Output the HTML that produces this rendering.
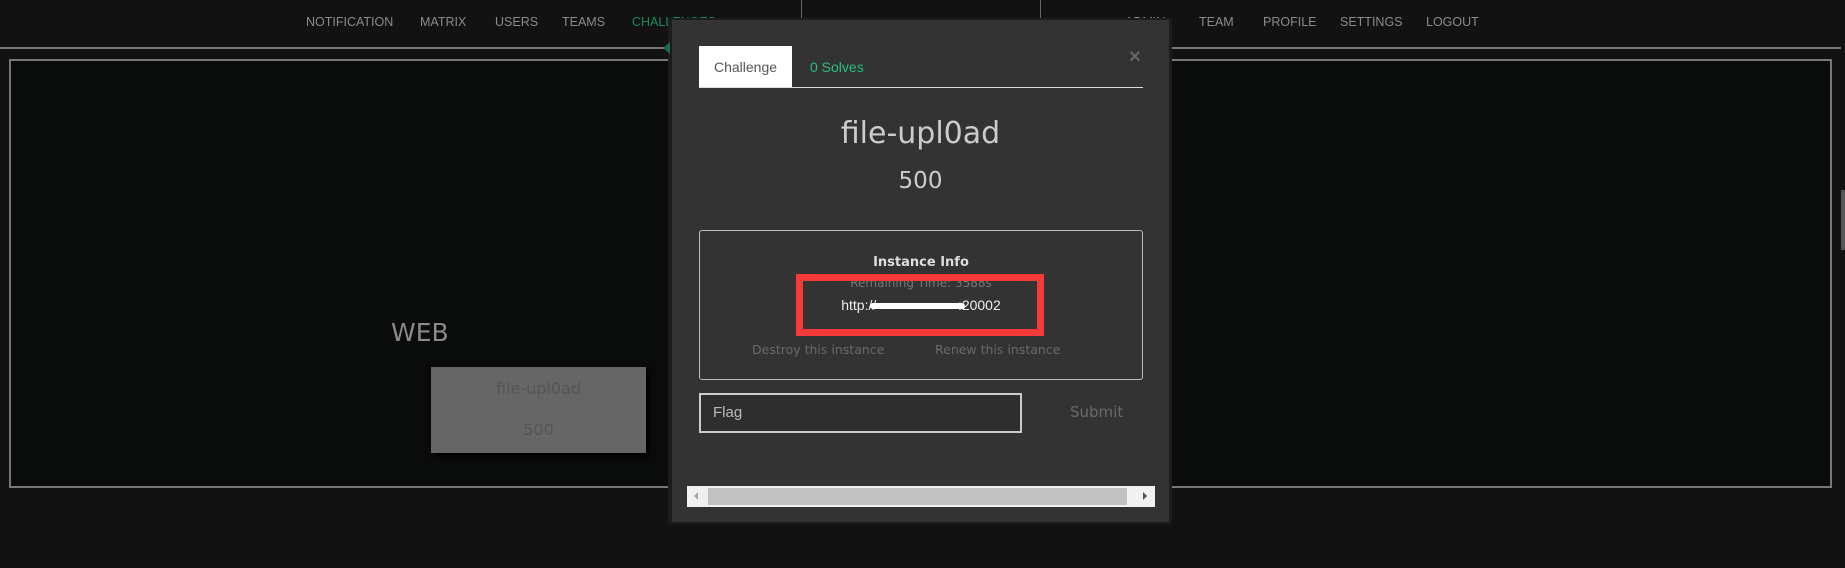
<!DOCTYPE html>
<html><head><meta charset="utf-8"><style>
*{margin:0;padding:0;box-sizing:border-box}
body{width:1845px;height:568px;background:#121212;position:relative;overflow:hidden;font-family:"Liberation Sans",sans-serif}
.a{position:absolute}
.nav{top:15px;font-size:12.5px;color:#8a8a8a;white-space:nowrap}
.orb{font-family:"DejaVu Sans",sans-serif}
</style></head><body>
<div class="a nav" style="left:306px">NOTIFICATION</div>
<div class="a nav" style="left:420px">MATRIX</div>
<div class="a nav" style="left:495px">USERS</div>
<div class="a nav" style="left:562px">TEAMS</div>
<div class="a nav" style="left:632px;color:#1c8a5c">CHALLENGES</div>
<div class="a nav" style="left:1125px">ADMIN</div>
<div class="a nav" style="left:1199px">TEAM</div>
<div class="a nav" style="left:1263px">PROFILE</div>
<div class="a nav" style="left:1340px">SETTINGS</div>
<div class="a nav" style="left:1426px">LOGOUT</div>
<div class="a" style="left:801px;top:0;width:1px;height:48px;background:#666"></div>
<div class="a" style="left:1040px;top:0;width:1px;height:48px;background:#666"></div>
<div class="a" style="left:0;top:47px;width:1841px;height:2px;background:#777"></div>
<div class="a" style="left:9px;top:59px;width:1823px;height:429px;border:2px solid #777;background:#0a0b0b"></div>
<div class="a" style="left:1841px;top:190px;width:4px;height:60px;background:#555"></div>
<div class="a orb" style="left:391px;top:318px;font-size:25px;color:#8a8a8a">WEB</div>
<div class="a" style="left:431px;top:367px;width:215px;height:86px;background:#666;box-shadow:3px 3px 5px #000"></div>
<div class="a orb" style="left:431px;top:379px;width:215px;text-align:center;font-size:16px;color:#555">file-upl0ad</div>
<div class="a orb" style="left:431px;top:420px;width:215px;text-align:center;font-size:16px;color:#555">500</div>

<div class="a" style="left:668px;top:18px;width:504px;height:506px;background:#1c1c1c"></div>
<div class="a" style="left:672px;top:20px;width:497px;height:502px;background:#333"></div>
<div class="a" style="left:663px;top:42px;width:0;height:0;border-top:6px solid transparent;border-bottom:6px solid transparent;border-right:7px solid #1c6a4c"></div>
<div class="a" style="left:699px;top:46px;width:93px;height:42px;background:#fff;color:#555;font-size:14px;text-align:center;line-height:42px">Challenge</div>
<div class="a" style="left:810px;top:46px;color:#2bbd7e;font-size:14px;line-height:42px">0 Solves</div>
<div class="a" style="left:699px;top:87px;width:444px;height:1px;background:#ddd"></div>
<div class="a" style="left:1129px;top:46px;color:#666;font-size:20px;font-weight:bold">×</div>
<div class="a orb" style="left:672px;top:116px;width:497px;text-align:center;font-size:30px;color:#ccc">file-upl0ad</div>
<div class="a orb" style="left:672px;top:168px;width:497px;text-align:center;font-size:23px;color:#ccc">500</div>
<div class="a" style="left:699px;top:230px;width:444px;height:150px;border:1px solid #bbb;border-radius:3px"></div>
<div class="a orb" style="left:699px;top:255px;width:444px;text-align:center;font-size:13px;color:#ddd;font-weight:bold">Instance Info</div>
<div class="a orb" style="left:699px;top:276px;width:444px;text-align:center;font-size:12px;color:#777">Remaining Time: 3588s</div>
<div class="a" style="left:699px;top:297px;width:444px;text-align:center;font-size:14px;color:#eee">http://&nbsp;&nbsp;&nbsp;&nbsp;&nbsp;&nbsp;&nbsp;&nbsp;&nbsp;&nbsp;&nbsp;&nbsp;&nbsp;&nbsp;&nbsp;&nbsp;&nbsp;&nbsp;&nbsp;&nbsp;&nbsp;:20002</div>
<div class="a" style="left:870px;top:303px;width:95px;height:6px;background:#fff;border-radius:3px"></div>
<div class="a" style="left:796px;top:274px;width:248px;height:62px;border:7px solid #f53a3a"></div>
<div class="a orb" style="left:752px;top:342px;font-size:12.5px;color:#6a6a6a;white-space:nowrap">Destroy this instance</div>
<div class="a orb" style="left:935px;top:342px;font-size:12.5px;color:#6a6a6a;white-space:nowrap">Renew this instance</div>
<div class="a" style="left:699px;top:393px;width:323px;height:40px;border:2px solid #ccc;background:#2e2e2e;color:#bbb;font-size:15px;line-height:36px;padding-left:12px">Flag</div>
<div class="a orb" style="left:1070px;top:403px;font-size:15px;color:#6a6a6a">Submit</div>
<div class="a" style="left:687px;top:486px;width:468px;height:21px;background:#f1f1f1"></div>
<div class="a" style="left:708px;top:488px;width:419px;height:17px;background:#c1c1c1"></div>
<div class="a" style="left:694px;top:492px;width:0;height:0;border-top:4px solid transparent;border-bottom:4px solid transparent;border-right:4px solid #a3a3a3"></div>
<div class="a" style="left:1143px;top:492px;width:0;height:0;border-top:4px solid transparent;border-bottom:4px solid transparent;border-left:4px solid #505050"></div>
</body></html>
